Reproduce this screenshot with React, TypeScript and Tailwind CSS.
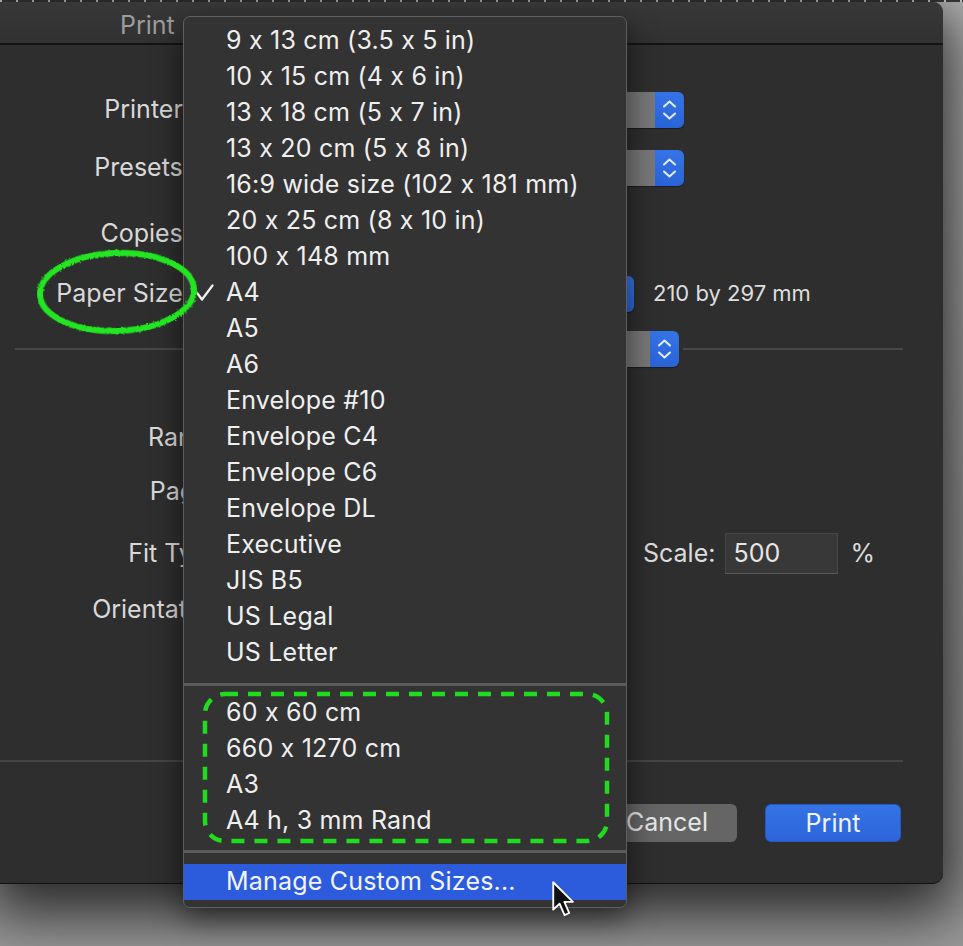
import React from 'react';

const FONT = { fontFamily: 'Inter, "Noto Sans", sans-serif' };

const SIZES = [
  '9 x 13 cm (3.5 x 5 in)',
  '10 x 15 cm (4 x 6 in)',
  '13 x 18 cm (5 x 7 in)',
  '13 x 20 cm (5 x 8 in)',
  '16:9 wide size (102 x 181 mm)',
  '20 x 25 cm (8 x 10 in)',
  '100 x 148 mm',
  'A4',
  'A5',
  'A6',
  'Envelope #10',
  'Envelope C4',
  'Envelope C6',
  'Envelope DL',
  'Executive',
  'JIS B5',
  'US Legal',
  'US Letter',
];

const CUSTOM = ['60 x 60 cm', '660 x 1270 cm', 'A3', 'A4 h, 3 mm Rand'];

function Stepper() {
  return (
    <div className="w-[29px] h-full bg-gradient-to-b from-[#3574e6] to-[#2a63d8] flex items-center justify-center">
      <svg width="29" height="36" viewBox="0 0 29 36" fill="none">
        <path d="M9 14.5 L14.5 9.5 L20 14.5" stroke="#e4ecff" strokeWidth="2" strokeLinecap="round" strokeLinejoin="round" />
        <path d="M9 21.5 L14.5 26.5 L20 21.5" stroke="#e4ecff" strokeWidth="2" strokeLinecap="round" strokeLinejoin="round" />
      </svg>
    </div>
  );
}

function PopUp({ className }: { className: string }) {
  return (
    <div className={`flex h-[36px] rounded-[6px] overflow-hidden shadow-[0_1px_1px_rgba(0,0,0,0.4)] ${className}`}>
      <div className="flex-1 bg-gradient-to-r from-[#5c5c5c] to-[#787878]" />
      <Stepper />
    </div>
  );
}

function Row({ label, mt, children }: { label: string; mt: string; children?: React.ReactNode }) {
  return (
    <div className={`grid grid-cols-[190px_1fr] gap-[10px] h-[36px] items-center ${mt}`}>
      <div className="text-right text-[25px] text-[#d9d9d9] whitespace-nowrap">{label}</div>
      <div className="flex items-center h-full">{children}</div>
    </div>
  );
}

function LowerRow({ label, mt, children }: { label: string; mt: string; children?: React.ReactNode }) {
  return (
    <div className={`grid grid-cols-[230px_1fr] gap-[6px] h-[36px] items-center ${mt}`}>
      <div className="text-right text-[25px] text-[#d9d9d9] whitespace-nowrap">{label}</div>
      <div className="flex items-center h-full">{children}</div>
    </div>
  );
}

export default function App() {
  return (
    <div
      className="relative w-[963px] h-[946px] overflow-hidden bg-gradient-to-b from-[#b9b9b9] via-[#a3a3a3] to-[#999999] [font-variant-ligatures:no-contextual]"
      style={FONT}
    >
      {/* desktop strip above the window */}
      <div className="h-[2px] bg-[repeating-linear-gradient(90deg,#d0d0d0_0px,#d0d0d0_2px,#3a3a3a_2px,#3a3a3a_16px)]" />

      {/* print dialog */}
      <div className="w-[943px] h-[882px] flex flex-col bg-[#2e2e2e] rounded-tr-[10px] rounded-br-[10px] shadow-[0_18px_60px_12px_rgba(0,0,0,0.75)] border-b border-[#111]">
        <div className="h-[43px] flex items-center pl-[120px] pt-[6px] bg-gradient-to-b from-[#383838] to-[#313131] border-b-2 border-[#141414] rounded-tr-[10px]">
          <span className="text-[25px] text-[#9d9d9d]">Print</span>
        </div>

        <div className="flex flex-col">
          <Row label="Printer:" mt="mt-[46px]">
            <PopUp className="w-[484px]" />
          </Row>
          <Row label="Presets:" mt="mt-[22px]">
            <PopUp className="w-[484px]" />
          </Row>
          <Row label="Copies:" mt="mt-[30px]">
            <div className="w-[60px] h-[32px] bg-[#3a3a3a]" />
          </Row>
          <Row label="Paper Size:" mt="mt-[24px]">
            <PopUp className="w-[434px]" />
            <span className="ml-[19px] text-[22px] text-[#dedede]">210 by 297 mm</span>
          </Row>

          <div className="mt-[20px] h-[36px] flex items-center pl-[15px] pr-[40px]">
            <div className="flex-1 h-[2px] bg-[#484848]" />
            <PopUp className="w-[440px] mx-[4px]" />
            <div className="flex-1 h-[2px] bg-[#484848]" />
          </div>

          <LowerRow label="Range:" mt="mt-[52px]" />
          <LowerRow label="Pages:" mt="mt-[18px]" />
          <LowerRow label="Fit Type:" mt="mt-[24px]">
            <div className="w-[407px]" />
            <span className="text-[25px] text-[#dcdcdc]">Scale:</span>
            <div className="ml-[10px] w-[113px] h-[41px] bg-[#383838] border border-[#464646] border-b-[#5a5a5a] flex items-center pl-[7px] text-[25px] text-[#e6e6e6]">
              500
            </div>
            <span className="ml-[12px] text-[25px] text-[#dcdcdc]">%</span>
          </LowerRow>
          <LowerRow label="Orientation:" mt="mt-[22px]" />

          <div className="mt-[133px] h-[2px] bg-[#454545] mr-[40px]" />

          <div className="mt-[42px] flex justify-end gap-[28px] pr-[42px]">
            <button className="w-[140px] h-[38px] rounded-[6px] bg-[#656565] text-[25px] text-[#e6e6e6]">Cancel</button>
            <button className="w-[136px] h-[38px] rounded-[6px] bg-gradient-to-b from-[#3573e4] to-[#2c65da] border border-[#2458c4] text-[25px] text-[#eef3ff]">
              Print
            </button>
          </div>
        </div>
      </div>

      {/* paper size menu */}
      <div className="absolute left-[183px] top-[16px] w-[444px] pt-[6px] pb-[7px] bg-[#333333] border border-[#5f5f5f] rounded-[7px] shadow-[0_10px_30px_rgba(0,0,0,0.55)] text-[25px] tracking-[0.2px] text-[#efefef]">
        {SIZES.map((s) => (
          <div key={s} className="h-[36px] flex items-center">
            <div className="w-[42px] h-full flex items-center pl-[12px]">
              {s === 'A4' && (
                <svg width="18" height="18" viewBox="0 0 18 18" fill="none">
                  <path d="M1.5 9.5 L6 15.5 L16.5 1.5" stroke="#f2f2f2" strokeWidth="2.2" strokeLinecap="round" strokeLinejoin="round" />
                </svg>
              )}
            </div>
            <span className="whitespace-nowrap">{s}</span>
          </div>
        ))}
        <div className="pt-[12px] pb-[9px]">
          <div className="h-[3px] bg-[#5a5a5a]" />
        </div>
        {CUSTOM.map((s) => (
          <div key={s} className="h-[36px] flex items-center pl-[42px]">
            <span className="whitespace-nowrap">{s}</span>
          </div>
        ))}
        <div className="pt-[11px] pb-[11px]">
          <div className="h-[3px] bg-[#5a5a5a]" />
        </div>
        <div className="h-[36px] flex items-center pl-[42px] bg-[#2c5cdc] text-[#f2f5ff]">Manage Custom Sizes...</div>
      </div>

      {/* green annotations */}
      <svg className="absolute left-[30px] top-[244px]" width="176" height="98" viewBox="0 0 176 98" fill="none">
        <defs>
          <filter id="rough" x="-10%" y="-10%" width="120%" height="120%">
            <feTurbulence type="fractalNoise" baseFrequency="0.6" numOctaves="2" seed="3" />
            <feDisplacementMap in="SourceGraphic" scale="3" />
          </filter>
        </defs>
        <ellipse cx="87" cy="48" rx="77" ry="39" transform="rotate(-2 87 48)" stroke="#22e622" strokeWidth="6" filter="url(#rough)" />
      </svg>
      <svg className="absolute left-[201px] top-[690px]" width="410" height="155" viewBox="0 0 410 155" fill="none">
        <rect x="4" y="4" width="402" height="147" rx="20" stroke="#1fdc1f" strokeWidth="4.5" strokeDasharray="13 10" />
      </svg>

      {/* mouse pointer */}
      <svg className="absolute left-[551px] top-[880px]" width="26" height="38" viewBox="0 0 14 20.5" fill="none">
        <path d="M1.2 1.2 L1.2 16 L4.6 12.8 L7.3 18.9 L9.8 17.8 L7.2 11.8 L11.8 11.8 Z" fill="#111" stroke="#fff" strokeWidth="1" strokeLinejoin="round" />
      </svg>
    </div>
  );
}
